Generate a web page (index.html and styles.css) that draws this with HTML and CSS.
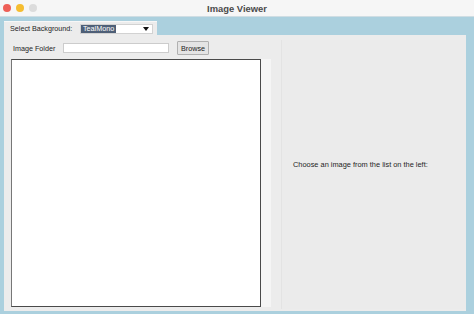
FILE: index.html
```html
<!DOCTYPE html>
<html lang="en">
<head>
    <meta charset="UTF-8">
    <meta name="viewport" content="width=device-width, initial-scale=1.0">
    <title>Image Viewer</title>
    <link rel="stylesheet" href="styles.css">
</head>
<body>
    <div class="window">
        <header class="titlebar">
            <div class="lights">
                <span class="light red"></span>
                <span class="light yellow"></span>
                <span class="light grey"></span>
            </div>
            <h1>Image Viewer</h1>
        </header>
        <div class="content">
            <div class="tab">
                <label>Select Background:</label>
                <div class="combo">
                    <span class="selected">TealMono</span>
                    <span class="arrow"></span>
                </div>
            </div>
            <div class="main">
                <div class="left">
                    <div class="folder-row">
                        <label>Image Folder</label>
                        <input type="text" class="entry">
                        <button class="btn">Browse</button>
                    </div>
                    <div class="list-wrap">
                        <div class="listbox"></div>
                        <div class="scroll"></div>
                    </div>
                </div>
                <div class="preview">
                    <p>Choose an image from the list on the left:</p>
                </div>
            </div>
        </div>
    </div>
</body>
</html>
```

FILE: styles.css
```css
body {
    margin: 0;
    padding: 0;
    background-color: #abd0de;
    font-family: "Liberation Sans", Arial, sans-serif;
    color: #1e1e1e;
}
.window {
    width: 474px;
    height: 314px;
    display: flex;
    flex-direction: column;
}
.titlebar {
    height: 17px;
    background-color: #f6f6f6;
    border-bottom: 1px solid #cfdde3;
    box-sizing: border-box;
    position: relative;
    display: flex;
    align-items: center;
    justify-content: center;
}
.lights {
    position: absolute;
    left: 3px;
    top: 4px;
    display: flex;
    gap: 5px;
}
.light {
    width: 8px;
    height: 8px;
    border-radius: 50%;
}
.red { background-color: #ee5f57; }
.yellow { background-color: #f5bd30; }
.grey { background-color: #dcdcdc; }
.titlebar h1 {
    margin: 0;
    font-size: 9.4px;
    font-weight: bold;
    color: #4a4a4a;
}
.content {
    flex: 1;
    display: flex;
    flex-direction: column;
    padding: 4px 8px 3px 4px;
}
.tab {
    width: 153px;
    height: 14px;
    background-color: #ececec;
    border-top: 1px solid #f7f7f7;
    box-sizing: border-box;
    display: flex;
    align-items: center;
    font-size: 7.2px;
}
.tab label {
    padding-left: 6px;
    width: 70px;
}
.combo {
    width: 73px;
    height: 10px;
    background-color: #ffffff;
    border: 1px solid #d2d2d2;
    box-sizing: border-box;
    display: flex;
    align-items: center;
    justify-content: space-between;
}
.combo .selected {
    background-color: #4e5f77;
    color: #ffffff;
    padding: 0 2px;
    line-height: 8px;
}
.combo .arrow {
    width: 0;
    height: 0;
    border-left: 3px solid transparent;
    border-right: 3px solid transparent;
    border-top: 4px solid #111111;
    margin-right: 3px;
}
.main {
    flex: 1;
    background-color: #ececec;
    display: flex;
}
.left {
    width: 277px;
    display: flex;
    flex-direction: column;
}
.folder-row {
    display: flex;
    align-items: center;
    height: 14px;
    margin-top: 6px;
    font-size: 7.2px;
}
.folder-row label {
    padding-left: 9px;
    width: 50px;
}
.entry {
    width: 106px;
    height: 10px;
    margin: 0;
    padding: 0;
    border: 1px solid #cccccc;
    box-sizing: border-box;
    background-color: #ffffff;
}
.btn {
    margin-left: 8px;
    width: 32px;
    height: 14px;
    padding: 0;
    font-family: inherit;
    font-size: 7.2px;
    color: #222222;
    background-color: #e4e4e4;
    border: 1px solid #b0b0b0;
    border-radius: 1px;
}
.list-wrap {
    display: flex;
    margin: 4px 0 4px 7px;
    flex: 1;
}
.listbox {
    width: 250px;
    background-color: #ffffff;
    border: 1px solid #4a4a4a;
    border-left-color: #777777;
    box-sizing: border-box;
}
.scroll {
    width: 10px;
    background-color: #f5f5f5;
}
.preview {
    flex: 1;
    margin: 5px 0 2px 0;
    border-left: 1px solid #e3e3e3;
    background-color: #ebebeb;
    display: flex;
    align-items: center;
    padding-left: 11px;
    padding-bottom: 20px;
}
.preview p {
    margin: 0;
    font-size: 7.4px;
}
```
